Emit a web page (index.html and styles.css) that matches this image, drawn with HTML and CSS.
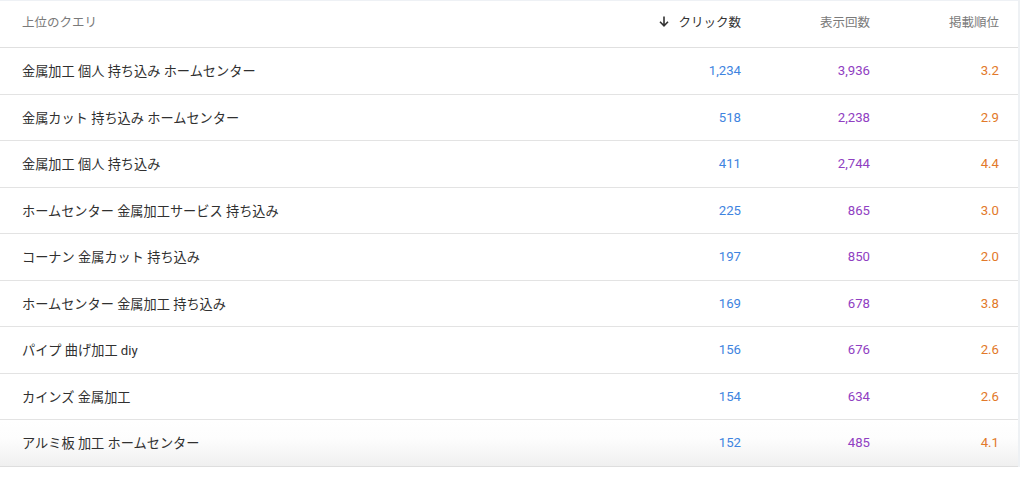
FILE: index.html
```html
<!DOCTYPE html>
<html lang="ja">
<head>
<meta charset="utf-8">
<link rel="stylesheet" href="styles.css">
</head>
<body>
<div class="card">
  <div class="row head">
    <div class="cell q">上位のクエリ</div>
    <div class="cell num active"><svg class="arrow" width="10" height="11" viewBox="0 0 10 11"><path d="M5 0.5V9.5M1 5.8L5 9.8L9 5.8" fill="none" stroke="#333" stroke-width="1.6"/></svg>クリック数</div>
    <div class="cell num">表示回数</div>
    <div class="cell num">掲載順位</div>
  </div>
  <div class="row"><div class="cell q">金属加工 個人 持ち込み ホームセンター</div><div class="cell num c">1,234</div><div class="cell num i">3,936</div><div class="cell num p">3.2</div></div>
  <div class="row"><div class="cell q">金属カット 持ち込み ホームセンター</div><div class="cell num c">518</div><div class="cell num i">2,238</div><div class="cell num p">2.9</div></div>
  <div class="row"><div class="cell q">金属加工 個人 持ち込み</div><div class="cell num c">411</div><div class="cell num i">2,744</div><div class="cell num p">4.4</div></div>
  <div class="row"><div class="cell q">ホームセンター 金属加工サービス 持ち込み</div><div class="cell num c">225</div><div class="cell num i">865</div><div class="cell num p">3.0</div></div>
  <div class="row"><div class="cell q">コーナン 金属カット 持ち込み</div><div class="cell num c">197</div><div class="cell num i">850</div><div class="cell num p">2.0</div></div>
  <div class="row"><div class="cell q">ホームセンター 金属加工 持ち込み</div><div class="cell num c">169</div><div class="cell num i">678</div><div class="cell num p">3.8</div></div>
  <div class="row"><div class="cell q">パイプ 曲げ加工 diy</div><div class="cell num c">156</div><div class="cell num i">676</div><div class="cell num p">2.6</div></div>
  <div class="row"><div class="cell q">カインズ 金属加工</div><div class="cell num c">154</div><div class="cell num i">634</div><div class="cell num p">2.6</div></div>
  <div class="row last"><div class="cell q">アルミ板 加工 ホームセンター</div><div class="cell num c">152</div><div class="cell num i">485</div><div class="cell num p">4.1</div></div>
</div>
</body>
</html>
```

FILE: styles.css
```css
html, body {
  margin: 0;
  padding: 0;
  background: #ffffff;
}
body {
  font-family: Roboto, "Noto Sans CJK JP", sans-serif;
  width: 1024px;
  height: 478px;
  overflow: hidden;
}
.card {
  width: 1020px;
  border-top: 1px solid #eef1f5;
  border-right: 2px solid #eef1f4;
  box-sizing: border-box;
  background: #fff;
}
.row {
  display: grid;
  grid-template-columns: 1fr 160px 129px 129px;
  align-items: center;
  height: 46.5px;
  box-sizing: border-box;
  padding: 0 19px 0 22px;
  border-bottom: 1px solid #e3e3e3;
  font-size: 13.2px;
  color: #303030;
}
.row.head {
  height: 47px;
  padding-bottom: 6px;
  color: #7a7a7a;
  font-size: 12.5px;
  border-bottom: 1px solid #e0e0e0;
}
.row.last {
  background: linear-gradient(to bottom, #ffffff 0%, #fdfdfd 40%, #f0f0f0 100%);
  border-bottom: 1px solid #dedede;
}
.cell.num {
  text-align: right;
  display: flex;
  justify-content: flex-end;
  align-items: center;
}
.active {
  color: #333;
}
.arrow {
  margin-right: 9px;
}
.c { color: #3f84e0; }
.i { color: #9040c2; }
.p { color: #e2792a; }
```
